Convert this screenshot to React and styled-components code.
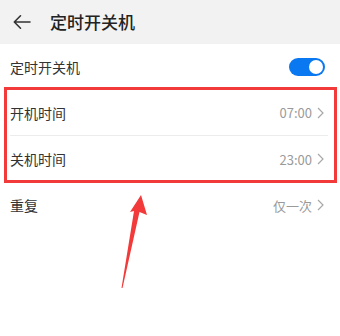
import React from "react";
import styled, { createGlobalStyle } from "styled-components";

const GlobalStyle = createGlobalStyle`
  html, body {
    margin: 0;
    padding: 0;
    background: #ffffff;
  }
  body {
    font-family: "Noto Sans CJK SC", "Noto Sans", sans-serif;
  }
`;

const Screen = styled.div`
  position: relative;
  width: 340px;
  height: 336px;
  overflow: hidden;
  background: #ffffff;
`;

const Header = styled.div`
  display: flex;
  align-items: center;
  height: 44px;
  padding-left: 13px;
  background: #f2f2f2;
  box-sizing: border-box;
`;

const BackButton = styled.svg`
  width: 18px;
  height: 16px;
  margin-top: -1px;
`;

const Title = styled.h1`
  margin: 0 0 0 19px;
  font-size: 17px;
  font-weight: 500;
  color: #222222;
  line-height: 1;
  margin-top: -2px;
`;

const Row = styled.div`
  display: flex;
  align-items: center;
  justify-content: space-between;
  height: 46px;
  padding: 0 16px 0 10px;
  box-sizing: border-box;
  border-bottom: ${(props) => (props.divider ? "1px solid #ececec" : "none")};
  margin: ${(props) => (props.divider ? "0 12px 0 10px" : "0")};
  padding-left: ${(props) => (props.divider ? "0" : "10px")};
  padding-right: ${(props) => (props.divider ? "4px" : "16px")};
`;

const Label = styled.span`
  font-size: 14px;
  color: #333333;
  line-height: 1;
`;

const Value = styled.span`
  display: flex;
  align-items: center;
  gap: 5px;
  font-size: 13px;
  color: #9a9a9a;
  line-height: 1;
`;

const Group = styled.div`
  position: relative;

  &::after {
    content: "";
    position: absolute;
    left: 4px;
    right: 3px;
    top: -3px;
    bottom: -1px;
    border: 3px solid #f23a3a;
    pointer-events: none;
  }
`;

const Toggle = styled.div`
  display: flex;
  align-items: center;
  justify-content: flex-end;
  width: 36px;
  height: 18px;
  padding: 2px;
  box-sizing: border-box;
  margin-right: -1px;
  border-radius: 9px;
  background: ${(props) => (props.on ? "#0a78f0" : "#cccccc")};
`;

const Knob = styled.div`
  width: 14px;
  height: 14px;
  border-radius: 50%;
  background: #ffffff;
`;

const Pointer = styled.svg`
  position: absolute;
  left: 0;
  top: 0;
  width: 340px;
  height: 336px;
  pointer-events: none;
`;

const Chevron = () => (
  <svg width="7" height="12" viewBox="0 0 7 12">
    <path d="M1 1 L6 6 L1 11" fill="none" stroke="#a8a8a8" strokeWidth="1.2" />
  </svg>
);

function App() {
  return (
    <Screen>
      <GlobalStyle />
      <Header>
        <BackButton viewBox="0 0 18 16">
          <path
            d="M17 8 H1.5 M7.5 1.8 L1.3 8 L7.5 14.2"
            fill="none"
            stroke="#333"
            strokeWidth="1.6"
            strokeLinecap="round"
            strokeLinejoin="round"
          />
        </BackButton>
        <Title>定时开关机</Title>
      </Header>
      <Row>
        <Label>定时开关机</Label>
        <Toggle on>
          <Knob />
        </Toggle>
      </Row>
      <Group>
        <Row divider>
          <Label>开机时间</Label>
          <Value>
            07:00
            <Chevron />
          </Value>
        </Row>
        <Row>
          <Label>关机时间</Label>
          <Value>
            23:00
            <Chevron />
          </Value>
        </Row>
      </Group>
      <Row>
        <Label>重复</Label>
        <Value>
          仅一次
          <Chevron />
        </Value>
      </Row>
      <Pointer viewBox="0 0 340 336">
        <polygon
          points="141,195 147,215 139.5,212 122.5,288 121.5,288 134,211 130,212"
          fill="#f23a3a"
        />
      </Pointer>
    </Screen>
  );
}

export default App;
